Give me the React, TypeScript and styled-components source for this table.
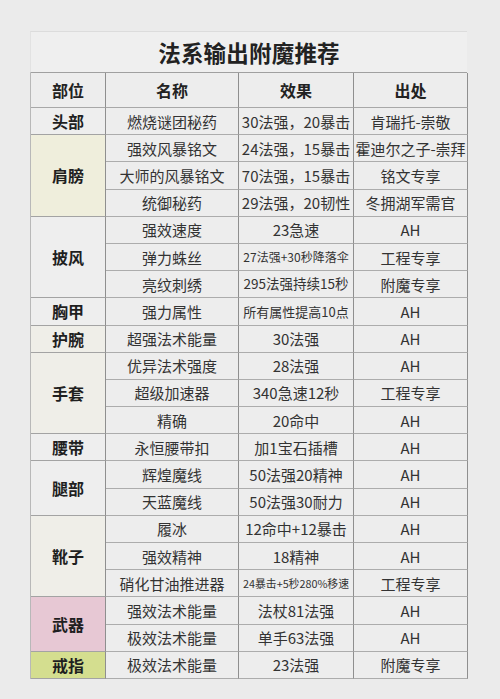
import { Fragment } from "react";
import styled, { createGlobalStyle } from "styled-components";

const GlobalStyle = createGlobalStyle`
  html, body {
    margin: 0;
    padding: 0;
    background: #ebebeb;
  }
  body {
    font-family: "Noto Sans CJK SC", "Noto Sans", sans-serif;
    color: #2b2b2b;
  }
`;

type Tone = "plain" | "cream" | "warm" | "pink" | "lime";

const toneColors: Record<Tone, string> = {
  plain: "#eeeeee",
  cream: "#efeedc",
  warm: "#efeee8",
  pink: "#e7c8d4",
  lime: "#d4de8f",
};

type Row = { name: string; effect: string; source: string; effectSize?: number };
type Group = { part: string; tone: Tone; rows: Row[] };

const groups: Group[] = [
  {
    part: "头部",
    tone: "plain",
    rows: [{ name: "燃烧谜团秘药", effect: "30法强，20暴击", source: "肯瑞托-崇敬" }],
  },
  {
    part: "肩膀",
    tone: "cream",
    rows: [
      { name: "强效风暴铭文", effect: "24法强，15暴击", source: "霍迪尔之子-崇拜" },
      { name: "大师的风暴铭文", effect: "70法强，15暴击", source: "铭文专享" },
      { name: "统御秘药", effect: "29法强，20韧性", source: "冬拥湖军需官" },
    ],
  },
  {
    part: "披风",
    tone: "plain",
    rows: [
      { name: "强效速度", effect: "23急速", source: "AH" },
      { name: "弹力蛛丝", effect: "27法强+30秒降落伞", source: "工程专享", effectSize: 12 },
      { name: "亮纹刺绣", effect: "295法强持续15秒", source: "附魔专享", effectSize: 13.5 },
    ],
  },
  {
    part: "胸甲",
    tone: "plain",
    rows: [{ name: "强力属性", effect: "所有属性提高10点", source: "AH", effectSize: 13 }],
  },
  {
    part: "护腕",
    tone: "warm",
    rows: [{ name: "超强法术能量", effect: "30法强", source: "AH" }],
  },
  {
    part: "手套",
    tone: "warm",
    rows: [
      { name: "优异法术强度", effect: "28法强", source: "AH" },
      { name: "超级加速器", effect: "340急速12秒", source: "工程专享" },
      { name: "精确", effect: "20命中", source: "AH" },
    ],
  },
  {
    part: "腰带",
    tone: "plain",
    rows: [{ name: "永恒腰带扣", effect: "加1宝石插槽", source: "AH" }],
  },
  {
    part: "腿部",
    tone: "plain",
    rows: [
      { name: "辉煌魔线", effect: "50法强20精神", source: "AH" },
      { name: "天蓝魔线", effect: "50法强30耐力", source: "AH" },
    ],
  },
  {
    part: "靴子",
    tone: "warm",
    rows: [
      { name: "履冰", effect: "12命中+12暴击", source: "AH" },
      { name: "强效精神", effect: "18精神", source: "AH" },
      { name: "硝化甘油推进器", effect: "24暴击+5秒280%移速", source: "工程专享", effectSize: 10.8 },
    ],
  },
  {
    part: "武器",
    tone: "pink",
    rows: [
      { name: "强效法术能量", effect: "法杖81法强", source: "AH" },
      { name: "极效法术能量", effect: "单手63法强", source: "AH" },
    ],
  },
  {
    part: "戒指",
    tone: "lime",
    rows: [{ name: "极效法术能量", effect: "23法强", source: "附魔专享" }],
  },
];

const Page = styled.div`
  padding: 31px 0 0 30px;
`;

const Sheet = styled.div`
  width: 437px;
`;

const Title = styled.div`
  height: 42px;
  box-sizing: border-box;
  border-top: 1px solid #dcdcdc;
  border-left: 1px solid #e2e2e2;
  border-bottom: 1px solid #a0a0a0;
  background: #efefef;
  display: flex;
  align-items: center;
  justify-content: center;
  font-size: 22.5px;
  font-weight: 700;
  color: #222;
  letter-spacing: 0.2px;
`;

const Grid = styled.div`
  display: grid;
  grid-template-columns: 75px 133px 115px 114px;
  grid-template-rows: 35px repeat(21, 27.2px);
  background: #ededed;
  border-left: 1px solid #b8b8b8;
  box-sizing: border-box;
  width: 437px;
`;

const HeadCell = styled.div`
  display: flex;
  align-items: center;
  justify-content: center;
  box-sizing: border-box;
  border-right: 1px solid #8f8f8f;
  border-bottom: 1px solid #a8a8a8;
  font-size: 16px;
  font-weight: 700;
  color: #222;
`;

const PartCell = styled.div<{ $tone: Tone; $span: number }>`
  grid-column: 1;
  grid-row: span ${(p) => p.$span};
  display: flex;
  align-items: center;
  justify-content: center;
  box-sizing: border-box;
  background: ${(p) => toneColors[p.$tone]};
  border-right: 1px solid #8f8f8f;
  border-bottom: 1px solid #a3a3a3;
  font-size: 16px;
  font-weight: 700;
  color: #1f1f1f;
`;

const Cell = styled.div<{ $col: number; $size?: number }>`
  grid-column: ${(p) => p.$col};
  display: flex;
  align-items: center;
  justify-content: center;
  box-sizing: border-box;
  border-right: 1px solid #8f8f8f;
  border-bottom: 1px solid #acacac;
  font-size: ${(p) => p.$size ?? 15}px;
  color: #333;
  white-space: nowrap;
  overflow: hidden;
  line-height: 1;
`;

export default function App() {
  return (
    <>
      <GlobalStyle />
      <Page>
        <Sheet>
          <Title>法系输出附魔推荐</Title>
          <Grid>
            <HeadCell>部位</HeadCell>
            <HeadCell>名称</HeadCell>
            <HeadCell>效果</HeadCell>
            <HeadCell>出处</HeadCell>
            {groups.map((g) =>
              g.rows.map((r, i) => (
                <Fragment key={g.part + i}>
                  {i === 0 && (
                    <PartCell $tone={g.tone} $span={g.rows.length}>
                      {g.part}
                    </PartCell>
                  )}
                  <Cell $col={2}>{r.name}</Cell>
                  <Cell $col={3} $size={r.effectSize}>
                    {r.effect}
                  </Cell>
                  <Cell $col={4}>{r.source}</Cell>
                </Fragment>
              ))
            )}
          </Grid>
        </Sheet>
      </Page>
    </>
  );
}
